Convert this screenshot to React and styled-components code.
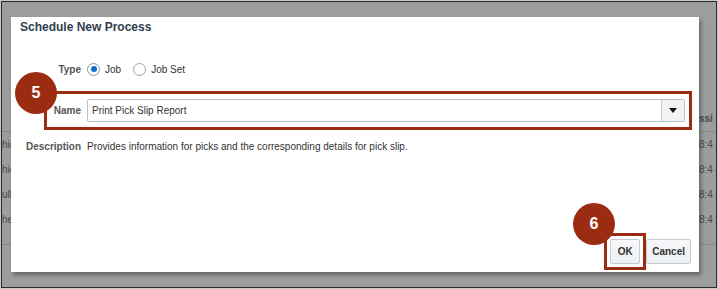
import styled, { createGlobalStyle } from "styled-components";

const GlobalStyle = createGlobalStyle`
  * {
    box-sizing: border-box;
  }
  body {
    margin: 0;
    background: #c9c9c9;
    font-family: "Liberation Sans", Arial, sans-serif;
  }
`;

const ACCENT = "#9b2c12";

const Frame = styled.div`
  position: relative;
  width: 716px;
  height: 287px;
  margin: 1px;
  border: 1px solid #2b2b2b;
  background: #9d9d9d;
  display: flex;
  justify-content: space-between;
  overflow: hidden;
`;

// page under the modal (greyed out)
const PageColumn = styled.div`
  width: ${(props) => props.width}px;
  padding-top: 103px;
  overflow: hidden;
  font-size: 10px;
  color: #4a4a4a;
`;
const PageHead = styled.div`
  height: 27px;
  line-height: 27px;
  font-weight: bold;
  border-bottom: 1px solid #8a8a8a;
  white-space: nowrap;
`;
const PageRows = styled.div`
  padding-bottom: 12px;
  border-bottom: 1px solid #8a8a8a;
`;
const PageCell = styled.div`
  height: 25px;
  line-height: 25px;
  white-space: nowrap;
`;

const Dialog = styled.div`
  position: absolute;
  left: 9px;
  top: 15px;
  width: 688px;
  height: 255px;
  background: #fff;
  box-shadow: 2px 3px 4px rgba(0, 0, 0, 0.35);
  display: flex;
  flex-direction: column;
`;
const Title = styled.h1`
  margin: 0;
  padding: 2px 9px;
  font-size: 12px;
  line-height: 16px;
  font-weight: bold;
  color: #2f3e4e;
`;
const Form = styled.div`
  display: grid;
  grid-template-columns: 56px 1fr;
  column-gap: 6px;
  margin-top: 22px;
  padding: 0 14px;
`;
const Label = styled.div`
  font-size: 10px;
  font-weight: bold;
  color: #555;
  text-align: right;
  align-self: center;
  margin-top: ${(props) => props.top || 0}px;
`;
const Field = styled.div`
  display: flex;
  align-items: center;
  min-height: ${(props) => props.h}px;
  margin-top: ${(props) => props.top || 0}px;
  font-size: 10px;
  color: #333;
`;
const RadioOption = styled.label`
  display: flex;
  align-items: center;
  gap: 5px;
  margin-right: 12px;
`;
const RadioDot = styled.span`
  width: 13px;
  height: 13px;
  border-radius: 50%;
  border: 1px solid ${(props) => (props.checked ? "#8a97a3" : "#9aa3ab")};
  background: #fff;
  display: flex;
  align-items: center;
  justify-content: center;
  &::after {
    content: "";
    width: 6px;
    height: 6px;
    border-radius: 50%;
    background: ${(props) => (props.checked ? "#0b6fce" : "transparent")};
  }
`;
const Select = styled.div`
  flex: 1;
  height: 23px;
  display: flex;
  border: 1px solid #b9c2ca;
  border-radius: 2px;
  background: #fff;
`;
const SelectText = styled.div`
  flex: 1;
  padding-left: 4px;
  line-height: 21px;
  font-size: 10px;
  color: #333;
`;
const SelectArrow = styled.div`
  width: 23px;
  border-left: 1px solid #c6cdd3;
  background: #f1f3f4;
  display: flex;
  align-items: center;
  justify-content: center;
`;

const Footer = styled.div`
  margin-top: auto;
  display: flex;
  align-items: center;
  justify-content: flex-end;
  padding: 0 8px 2px;
`;
const FocusBox = styled.div`
  display: flex;
  padding: 3px;
  border: 3px solid ${ACCENT};
`;
const Button = styled.button`
  height: 25px;
  min-width: 30px;
  padding: 0 5px;
  border: 1px solid #c3ccd4;
  border-radius: 2px;
  background: linear-gradient(#f7f8f9, #eceff1);
  font-family: inherit;
  font-size: 10px;
  font-weight: bold;
  color: #333;
`;

const Highlight = styled.div`
  position: absolute;
  left: 33px;
  top: 74px;
  width: 648px;
  height: 39px;
  border: 3px solid ${ACCENT};
  pointer-events: none;
`;
const Badge = styled.div`
  position: absolute;
  left: ${(props) => props.x}px;
  top: ${(props) => props.y}px;
  width: 42px;
  height: 42px;
  border-radius: 50%;
  background: ${ACCENT};
  color: #fff;
  font-size: 16px;
  font-weight: bold;
  display: flex;
  align-items: center;
  justify-content: center;
`;

export default function App() {
  return (
    <>
      <GlobalStyle />
      <Frame>
        <PageColumn width={12}>
          <PageHead />
          <PageRows>
            <PageCell>hic</PageCell>
            <PageCell>hic</PageCell>
            <PageCell>ull</PageCell>
            <PageCell>he</PageCell>
          </PageRows>
        </PageColumn>
        <PageColumn width={17}>
          <PageHead>ssi</PageHead>
          <PageRows>
            <PageCell>8:4</PageCell>
            <PageCell>8:4</PageCell>
            <PageCell>8:4</PageCell>
            <PageCell>8:4</PageCell>
          </PageRows>
        </PageColumn>

        <Dialog>
          <Title>Schedule New Process</Title>
          <Form>
            <Label>Type</Label>
            <Field h={20}>
              <RadioOption>
                <RadioDot checked />
                Job
              </RadioOption>
              <RadioOption>
                <RadioDot />
                Job Set
              </RadioOption>
            </Field>
            <Label top={20}>Name</Label>
            <Field h={23} top={20}>
              <Select>
                <SelectText>Print Pick Slip Report</SelectText>
                <SelectArrow>
                  <svg width="8" height="5" viewBox="0 0 8 5">
                    <path d="M0 0h8L4 5z" fill="#111" />
                  </svg>
                </SelectArrow>
              </Select>
            </Field>
            <Label top={17}>Description</Label>
            <Field h={14} top={17}>
              Provides information for picks and the corresponding details for
              pick slip.
            </Field>
          </Form>
          <Footer>
            <FocusBox>
              <Button>OK</Button>
            </FocusBox>
            <Button>Cancel</Button>
          </Footer>

          <Highlight />
          <Badge x={4} y={55}>5</Badge>
          <Badge x={562} y={186}>6</Badge>
        </Dialog>
      </Frame>
    </>
  );
}
